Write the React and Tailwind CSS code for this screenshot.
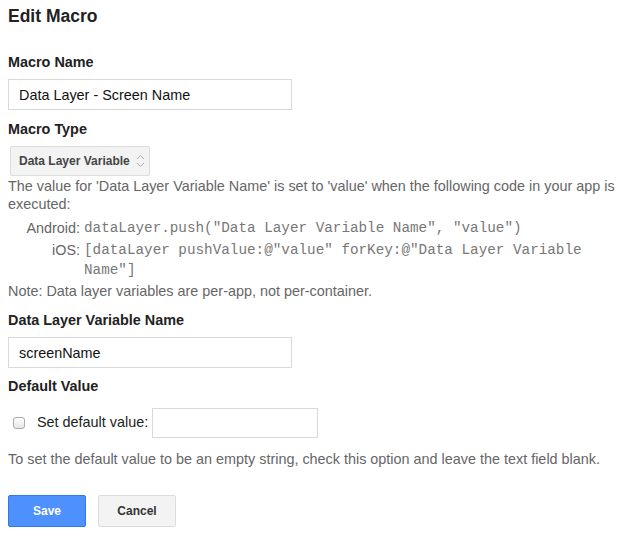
export default function App() {
  return (
    <div className="min-h-screen bg-white px-2 pt-[5px] text-[14.4px] text-[#222] font-['Liberation_Sans',Arial,sans-serif]">
      <h1 className="text-[17.5px] font-bold leading-[22px] text-[#222]">Edit Macro</h1>

      <div className="mt-[26px]">
        <label className="block font-bold leading-[18px]">Macro Name</label>
        <input
          type="text"
          defaultValue="Data Layer - Screen Name"
          className="mt-[8px] block h-[31px] w-[284px] border border-[#d9d9d9] px-[10px] text-[14.4px] text-[#111] outline-none"
        />
      </div>

      <div className="mt-[10px]">
        <label className="block font-bold leading-[18px]">Macro Type</label>
        <div className="ml-[2px] mt-[8px] flex h-[30px] w-[140px] items-center justify-between rounded-[2px] border border-[#dcdcdc] bg-[#f3f3f3] pl-[8px] pr-[4px]">
          <span className="text-[12px] font-bold text-[#444]">Data Layer Variable</span>
          <svg width="9" height="14" viewBox="0 0 9 14" fill="none" stroke="#aaa" strokeWidth="1">
            <path d="M1 5 L4.5 1.5 L8 5" />
            <path d="M1 9 L4.5 12.5 L8 9" />
          </svg>
        </div>
      </div>

      <div className="mt-[1px] leading-[18px] text-[#666]">
        <p>The value for 'Data Layer Variable Name' is set to 'value' when the following code in your app is executed:</p>
        <table className="mt-[4px]">
          <tbody>
            <tr>
              <td className="w-[76px] py-[2px] pr-[4px] text-right align-top">Android:</td>
              <td className="py-[2px] font-['Liberation_Mono','Courier_New',monospace] text-[14.3px] leading-[18px] text-[#777]">
                dataLayer.push("Data Layer Variable Name", "value")
              </td>
            </tr>
            <tr>
              <td className="pt-[1px] pb-[2px] pr-[4px] text-right align-top leading-[20px]">iOS:</td>
              <td className="w-[510px] pt-[1px] pb-[2px] font-['Liberation_Mono','Courier_New',monospace] text-[14.3px] leading-[20px] text-[#777]">
                [dataLayer pushValue:@"value" forKey:@"Data Layer Variable Name"]
              </td>
            </tr>
          </tbody>
        </table>
        <p>Note: Data layer variables are per-app, not per-container.</p>
      </div>

      <div className="mt-[11px]">
        <label className="block font-bold leading-[18px]">Data Layer Variable Name</label>
        <input
          type="text"
          defaultValue="screenName"
          className="mt-[8px] block h-[31px] w-[284px] border border-[#d9d9d9] px-[10px] text-[14.4px] text-[#111] outline-none"
        />
      </div>

      <div className="mt-[9px]">
        <label className="block font-bold leading-[18px]">Default Value</label>
        <div className="mt-[13px] flex items-center">
          <span className="ml-[5px] inline-block h-[12px] w-[12px] rounded-[3px] border border-[#aaa] bg-gradient-to-b from-white to-[#e6e6e6]" />
          <span className="ml-[12px] text-[#222]">Set default value:</span>
          <input
            type="text"
            className="ml-[4px] block h-[30px] w-[166px] border border-[#d9d9d9] px-[8px] outline-none"
          />
        </div>
      </div>

      <p className="mt-[12px] leading-[18px] text-[#666]">
        To set the default value to be an empty string, check this option and leave the text field blank.
      </p>

      <div className="mt-[27px] flex gap-[12px]">
        <button className="h-[32px] w-[78px] rounded-[2px] border border-[#3079ed] bg-[#4d90fe] text-[12px] font-bold text-white">
          Save
        </button>
        <button className="h-[32px] w-[78px] rounded-[2px] border border-[#dcdcdc] bg-[#f3f3f3] text-[12px] font-bold text-[#333]">
          Cancel
        </button>
      </div>
    </div>
  );
}
